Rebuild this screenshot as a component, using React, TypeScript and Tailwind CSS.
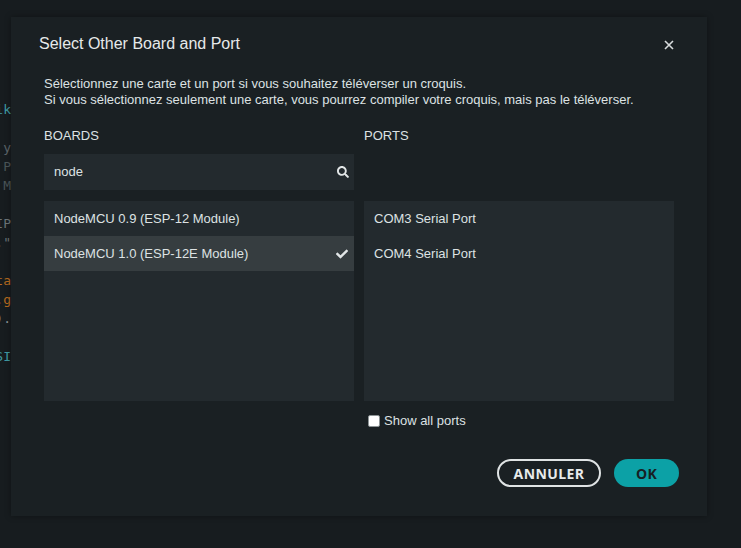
import React from "react";
import { FaSearch, FaCheck } from "react-icons/fa";

const codeLines: { t: string; c: string }[] = [
  { t: "ik", c: "text-[#3f9aa3]" },
  { t: "", c: "" },
  { t: "y", c: "text-[#5b6367]" },
  { t: "P", c: "text-[#4b5558]" },
  { t: "M", c: "text-[#4b5558]" },
  { t: "", c: "" },
  { t: "IP", c: "text-[#6c7478]" },
  { t: '."', c: "text-[#6c7478]" },
  { t: "", c: "" },
  { t: "ta", c: "text-[#b66a1f]" },
  { t: ".g", c: "text-[#b66a1f]" },
  { t: ").", c: "text-[#8a9295]" },
  { t: "", c: "" },
  { t: "SI", c: "text-[#3f9aa3]" },
];

export default function App() {
  return (
    <div className="relative w-[741px] h-[548px] overflow-hidden bg-[#171c1f] font-['Liberation_Sans',Arial,sans-serif]">
      {/* editor behind */}
      <div className="w-[40px] h-full pt-[100px] overflow-hidden">
        <div className="w-[11px] overflow-hidden flex flex-col font-['DejaVu_Sans_Mono',monospace] text-[13px] leading-[19px]">
          {codeLines.map((l, i) => (
            <div key={i} className={`flex justify-end whitespace-pre h-[19px] ${l.c}`}>
              <span className="shrink-0">{l.t}</span>
            </div>
          ))}
        </div>
      </div>

      {/* dialog */}
      <div className="absolute left-[11px] top-[17px] w-[696px] h-[499px] bg-[#1a2023] flex flex-col shadow-[0_0_6px_rgba(0,0,0,0.35)]">
        <div className="flex items-center justify-between pt-[17px] pl-[28px] pr-[33px]">
          <div className="text-[16px] leading-[20px] text-[#e6e9ea]">Select Other Board and Port</div>
          <svg width="10" height="10" viewBox="0 0 10 10" className="text-[#d8dcdd] mt-[1px]">
            <path d="M1 1 L9 9 M9 1 L1 9" stroke="currentColor" strokeWidth="1.6" />
          </svg>
        </div>

        <div className="px-[33px] mt-[22px] text-[13px] leading-[16px] text-[#dde2e3]">
          <div>Sélectionnez une carte et un port si vous souhaitez téléverser un croquis.</div>
          <div>Si vous sélectionnez seulement une carte, vous pourrez compiler votre croquis, mais pas le téléverser.</div>
        </div>

        <div className="px-[33px] mt-[20px] grid grid-cols-[310px_310px] gap-x-[10px] text-[13px] text-[#dde2e3]">
          <div className="leading-[16px]">BOARDS</div>
          <div className="leading-[16px]">PORTS</div>

          <div className="mt-[10px] h-[36px] bg-[#232a2e] flex items-center justify-between pl-[10px] pr-[5px]">
            <span>node</span>
            <FaSearch className="w-[12px] h-[12px] text-[#e2e6e7]" />
          </div>
          <div />

          <div className="mt-[11px] h-[200px] bg-[#232a2e] flex flex-col">
            <div className="h-[35px] flex items-center pl-[10px]">NodeMCU 0.9 (ESP-12 Module)</div>
            <div className="h-[35px] flex items-center justify-between pl-[10px] pr-[6px] bg-[#363d40]">
              <span>NodeMCU 1.0 (ESP-12E Module)</span>
              <FaCheck className="w-[12px] h-[12px] text-[#e2e6e7]" />
            </div>
          </div>
          <div className="mt-[11px] h-[200px] bg-[#232a2e] flex flex-col">
            <div className="h-[35px] flex items-center pl-[10px]">COM3 Serial Port</div>
            <div className="h-[35px] flex items-center pl-[10px]">COM4 Serial Port</div>
          </div>

          <div />
          <div className="mt-[12px] h-[16px] flex items-center pl-[4px]">
            <div className="w-[12px] h-[12px] bg-white rounded-[2px] border border-[#8d9496] -mt-[1px]" />
            <span className="ml-[4px] leading-[16px]">Show all ports</span>
          </div>
        </div>

        <div className="mt-[30px] pr-[28px] flex justify-end gap-[13px] font-['Open_Sans',sans-serif] font-bold text-[14px] tracking-[0.4px]">
          <div className="w-[104px] h-[28px] rounded-full border-2 border-[#dfe3e4] text-[#e8ebec] flex items-center justify-center">
            ANNULER
          </div>
          <div className="w-[65px] h-[28px] rounded-full bg-[#0ca1a6] text-[#172023] flex items-center justify-center">
            OK
          </div>
        </div>
      </div>
    </div>
  );
}
